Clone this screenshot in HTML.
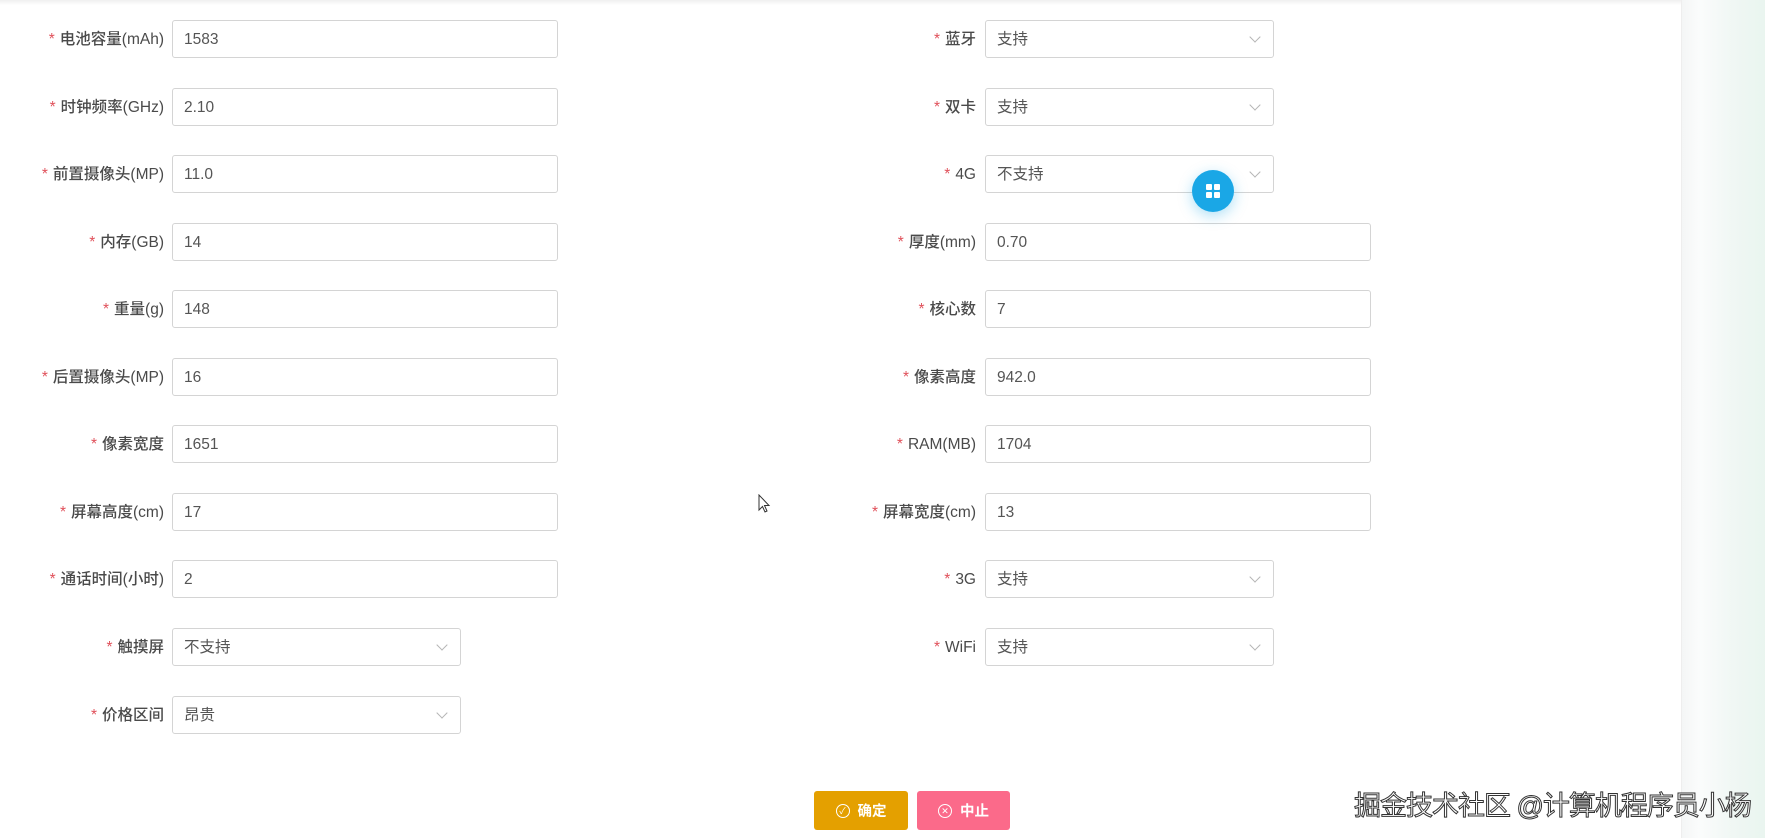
<!DOCTYPE html>
<html><head><meta charset="utf-8"><style>
body{margin:0;width:1765px;height:838px;overflow:hidden;background:#fff;font-family:"Liberation Sans","Noto Sans CJK SC",sans-serif;position:relative}
.top{position:absolute;left:0;top:0;width:1681px;height:5px;background:linear-gradient(#f0f0f0,#fff)}
.side{position:absolute;left:1681px;top:0;width:84px;height:838px;background:linear-gradient(90deg,#f4f6f6 0,#fbfcfc 20%,#f0f7f4 60%,#e9f5ef 100%);border-left:1px solid #eee}
.lbl{position:absolute;font-size:15.5px;color:#4a4a4a;text-align:right;width:200px;height:38px;line-height:40px;font-weight:500}
.lbl b{color:#e0505a;font-weight:normal;margin-right:5px}
.in{position:absolute;border:1px solid #d4d4d4;border-radius:3px;box-sizing:border-box;height:38px;line-height:38px;padding-left:11px;font-size:15.5px;color:#555}
.sel:after{content:"";position:absolute;right:14px;top:12px;width:7px;height:7px;border-right:1px solid #b5b5b5;border-bottom:1px solid #b5b5b5;transform:rotate(45deg)}
.btn{position:absolute;top:791px;height:39px;color:#fff;font-size:14.5px;border-radius:3px;display:flex;align-items:center;justify-content:center;font-weight:bold}
.btn span{display:inline-block;width:12px;height:12px;border:1.5px solid #fff;border-radius:50%;margin-right:8px;font-size:9px;line-height:12px;text-align:center;font-weight:normal}
.fab{position:absolute;left:1192px;top:170px;width:42px;height:42px;border-radius:50%;background:#1aa7e6;box-shadow:0 4px 14px rgba(26,167,230,.35)}
.fab i{position:absolute;width:6px;height:6px;background:#fff;border-radius:1px}
.wm{position:absolute;left:1354px;top:784px;font-size:27px;color:#fff;-webkit-text-stroke:1px #333;letter-spacing:-1px;white-space:nowrap}
</style></head><body>
<div class="top"></div><div class="side"></div>
<div id="f"></div>
<script>
var L=[["电池容量(mAh)","1583",0],["时钟频率(GHz)","2.10",0],["前置摄像头(MP)","11.0",0],["内存(GB)","14",0],["重量(g)","148",0],["后置摄像头(MP)","16",0],["像素宽度","1651",0],["屏幕高度(cm)","17",0],["通话时间(小时)","2",0],["触摸屏","不支持",1],["价格区间","昂贵",1]];
var R=[["蓝牙","支持",1],["双卡","支持",1],["4G","不支持",1],["厚度(mm)","0.70",0],["核心数","7",0],["像素高度","942.0",0],["RAM(MB)","1704",0],["屏幕宽度(cm)","13",0],["3G","支持",1],["WiFi","支持",1]];
var h="";
function row(a,i,lx,ix,iw,sw){var t=Math.round(20+i*67.55);
h+='<div class="lbl" style="left:'+lx+'px;top:'+t+'px"><b>*</b>'+a[0]+'</div>';
h+='<div class="in'+(a[2]?' sel':'')+'" style="left:'+ix+'px;top:'+t+'px;width:'+(a[2]?sw:iw)+'px">'+a[1]+'</div>';}
L.forEach(function(a,i){row(a,i,-36,172,386,289)});
R.forEach(function(a,i){row(a,i,776,985,386,289)});
document.getElementById("f").innerHTML=h;
</script>
<div class="fab"><i style="left:14px;top:14px"></i><i style="left:22px;top:14px"></i><i style="left:14px;top:22px"></i><i style="left:22px;top:22px"></i></div>
<div class="btn" style="left:814px;width:94px;background:#e4a000"><span>✓</span>确定</div>
<div class="btn" style="left:917px;width:93px;background:#fb6a8a"><span>✕</span>中止</div>
<div class="wm">掘金技术社区 @计算机程序员小杨</div>
<svg style="position:absolute;left:758px;top:494px" width="14" height="20" viewBox="0 0 14 20"><path d="M1 1 L1 16 L4.5 12.5 L7 18 L9 17 L6.5 11.5 L11 11.5 Z" fill="#fff" stroke="#333" stroke-width="1"/></svg>
</body></html>
